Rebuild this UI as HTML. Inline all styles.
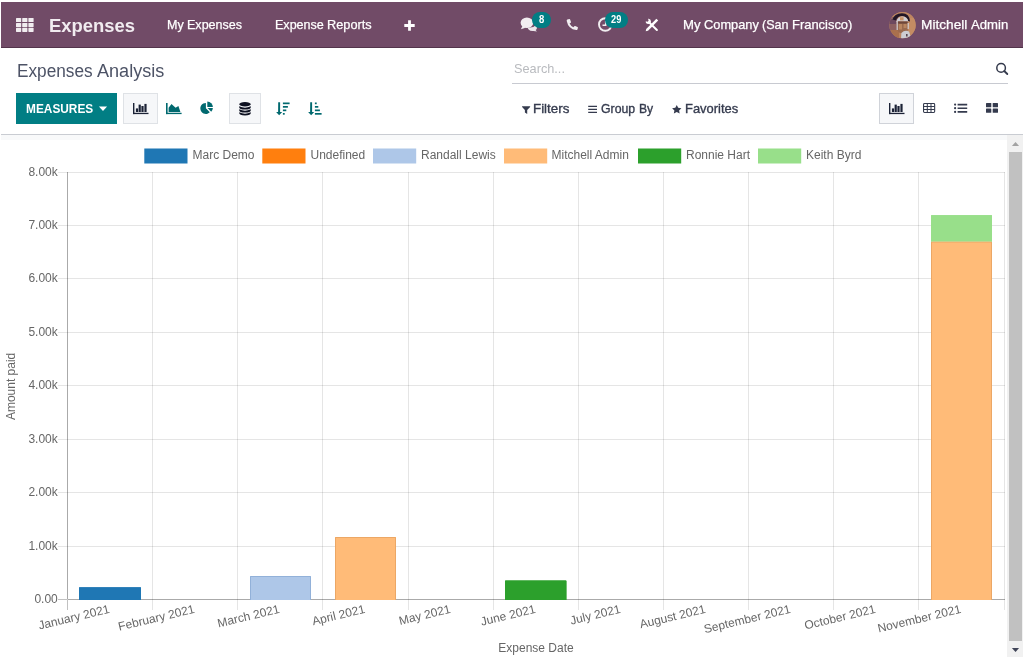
<!DOCTYPE html>
<html lang="en">
<head>
<meta charset="utf-8">
<title>Expenses Analysis</title>
<style>
html,body{margin:0;padding:0;background:#fff;}
body{width:1024px;height:658px;position:relative;overflow:hidden;font-family:"Liberation Sans",sans-serif;}
.t{position:absolute;white-space:pre;line-height:20px;height:20px;}
.abs{position:absolute;}
#nav{position:absolute;left:1px;top:2px;width:1022px;height:45px;background:#714b67;border-bottom:1px solid #53344b;}
svg{position:absolute;overflow:visible;}
.btn{position:absolute;box-sizing:border-box;}
</style>
</head>
<body>

<header>
<div id="nav"></div>
<svg style="left:16px;top:18px" width="18" height="14" viewBox="0 0 18 14"><rect x="0.00" y="0.00" width="5.2" height="4.1" rx="0.6" fill="#f1edf0"/><rect x="6.20" y="0.00" width="5.2" height="4.1" rx="0.6" fill="#f1edf0"/><rect x="12.40" y="0.00" width="5.2" height="4.1" rx="0.6" fill="#f1edf0"/><rect x="0.00" y="4.90" width="5.2" height="4.1" rx="0.6" fill="#f1edf0"/><rect x="6.20" y="4.90" width="5.2" height="4.1" rx="0.6" fill="#f1edf0"/><rect x="12.40" y="4.90" width="5.2" height="4.1" rx="0.6" fill="#f1edf0"/><rect x="0.00" y="9.80" width="5.2" height="4.1" rx="0.6" fill="#f1edf0"/><rect x="6.20" y="9.80" width="5.2" height="4.1" rx="0.6" fill="#f1edf0"/><rect x="12.40" y="9.80" width="5.2" height="4.1" rx="0.6" fill="#f1edf0"/></svg>
<div><span class="t" style="left:49.40px;top:16.05px;font-size:19.2px;color:#f1ecf0;font-weight:700;transform:scaleX(0.9600);transform-origin:0 0;">Expenses</span></div>
<div><span class="t" style="left:166.84px;top:14.50px;font-size:13px;color:#fff;font-weight:400;transform:scaleX(0.9636);transform-origin:0 0;-webkit-text-stroke:0.25px #fff;">My </span><span class="t" style="left:187.48px;top:14.50px;font-size:13px;color:#fff;font-weight:400;transform:scaleX(0.9650);transform-origin:0 0;-webkit-text-stroke:0.25px #fff;">Expenses</span></div>
<div><span class="t" style="left:275.44px;top:14.50px;font-size:13px;color:#fff;font-weight:400;transform:scaleX(0.9645);transform-origin:0 0;-webkit-text-stroke:0.25px #fff;">Expense </span><span class="t" style="left:326.92px;top:14.50px;font-size:13px;color:#fff;font-weight:400;transform:scaleX(0.9808);transform-origin:0 0;-webkit-text-stroke:0.25px #fff;">Reports</span></div>
<svg style="left:404px;top:19.5px" width="11" height="11" viewBox="0 0 11 11"><path d="M4.1 0.3h2.8v3.8h3.8v2.8h-3.8v3.8h-2.8v-3.8h-3.8v-2.8h3.8z" fill="#fff"/></svg>
<svg style="left:520px;top:17px" width="18" height="15" viewBox="0 0 18 15">
<path d="M10.2 10.6 Q14 10.4 15.4 8.4 Q17.2 9.6 17 11 Q16.8 12.4 15.6 13 L16.9 14.6 L13.4 13.9 Q10.4 14.3 8.6 12.4 Q7.9 11.6 7.8 11 Z" fill="#ebe5ea"/>
<ellipse cx="6.9" cy="5.7" rx="6.3" ry="5.3" fill="#f1edf0"/>
<path d="M2.4 9 L0.9 12.2 L5.6 10.8z" fill="#f1edf0"/>
</svg>
<div class="abs" style="left:532px;top:12px;width:19px;height:16px;border-radius:8px;background:#017e84;"></div>
<div class="t " style="left:538.6px;top:9.19px;font-size:11px;color:#fff;letter-spacing:0.000px;font-weight:700;transform:scaleX(0.86);transform-origin:0 0;">8</div>
<svg style="left:566px;top:19px" width="13" height="12" viewBox="0 0 13 12">
<path d="M1.3 0.5 L3.4 0.1 Q4 0.1 4.2 0.7 L5 3 Q5.1 3.5 4.7 3.8 L3.6 4.6 Q4.8 7.2 7.4 8.3 L8.3 7.2 Q8.7 6.8 9.2 7 L11.5 8 Q12 8.3 11.9 8.9 L11.4 10.6 Q11.1 11.2 10.2 11.1 Q2.4 10.2 0.7 2 Q0.6 0.9 1.3 0.5z" fill="#f1edf0"/></svg>
<svg style="left:598px;top:17px" width="15" height="15" viewBox="0 0 15 15">
<circle cx="7.3" cy="7.5" r="6.3" fill="none" stroke="#f1edf0" stroke-width="1.9"/>
<path d="M7.7 4v4.3h-3.2" fill="none" stroke="#f1edf0" stroke-width="1.5"/></svg>
<div class="abs" style="left:605px;top:12px;width:23px;height:16px;border-radius:8px;background:#017e84;"></div>
<div class="t " style="left:611.2px;top:9.19px;font-size:11px;color:#fff;letter-spacing:0.000px;font-weight:700;transform:scaleX(0.84);transform-origin:0 0;">29</div>
<svg style="left:645px;top:18px" width="14" height="14" viewBox="0 0 14 14">
<path d="M5 5.2 L11.9 12" stroke="#fff" stroke-width="2" stroke-linecap="round" fill="none"/>
<path d="M3.1 0.8 A2.6 2.6 0 1 1 0.75 3.2 L2.6 3.7 L3.6 2.7 Z" fill="#fff"/>
<path d="M11.4 0.8 L13.2 2.6 L3 12.8 L0.7 13.3 L1.2 11 Z" fill="#fff"/>
</svg>
<div><span class="t" style="left:683.19px;top:14.50px;font-size:13px;color:#fff;font-weight:400;transform:scaleX(1.0121);transform-origin:0 0;-webkit-text-stroke:0.25px #fff;">My </span><span class="t" style="left:703.91px;top:14.50px;font-size:13px;color:#fff;font-weight:400;transform:scaleX(0.9864);transform-origin:0 0;-webkit-text-stroke:0.25px #fff;">Company </span><span class="t" style="left:761.78px;top:14.50px;font-size:13px;color:#fff;font-weight:400;transform:scaleX(0.9654);transform-origin:0 0;-webkit-text-stroke:0.25px #fff;">(San </span><span class="t" style="left:792.31px;top:14.50px;font-size:13px;color:#fff;font-weight:400;transform:scaleX(0.9949);transform-origin:0 0;-webkit-text-stroke:0.25px #fff;">Francisco)</span></div>
<svg style="left:889px;top:12px" width="27" height="27" viewBox="0 0 27 27">
<defs><clipPath id="av"><circle cx="13.5" cy="13.1" r="13.2"/></clipPath><filter id="avb" x="-10%" y="-10%" width="120%" height="120%"><feGaussianBlur stdDeviation="0.55"/></filter></defs>
<g clip-path="url(#av)"><rect width="27" height="27" fill="#bd8560"/><g filter="url(#avb)">
<rect x="-3" y="-3" width="33" height="33" fill="#bd8560"/>
<path d="M0 5 H9 V19 H0 Z" fill="#8d6060"/>
<path d="M0 7 H7 V12 H0 Z" fill="#6d4a5e"/>
<path d="M2 18 H10 V27 H2 Z" fill="#a9704e"/>
<path d="M19.5 6 H27 V22 H19.5 Z" fill="#c48c64"/>
<path d="M3.5 7.5 Q5 1.5 13 1.2 Q20.5 1.2 21 9.5 L19.2 9 Q18.5 5.5 15.5 4.4 Q12 3.4 9.5 5 Q7.5 6.4 7 8.5 Z" fill="#211828"/>
<path d="M7.4 10 Q7.6 6.6 10 5.4 Q13.5 3.8 17 5.4 Q19.2 6.6 19.2 10 Z" fill="#cfcdd3"/>
<path d="M11 5.2 H14.6 V8.4 H11 Z" fill="#c99468"/>
<path d="M8.4 9.2 H18.8 V18 Q18 21 13.6 21.5 Q9.2 21 8.4 18 Z" fill="#9a6a50"/>
<path d="M8.6 9.6 H18.6 V11.6 H8.6 Z" fill="#6e463a"/>
<path d="M10 12 H13 V17.5 H10 Z M14.6 12 H17.6 V16 H14.6 Z" fill="#b98660"/>
<path d="M7.6 9 H8.8 V18 H7.6 Z M18.6 11 H19.8 V17 H18.6 Z" fill="#d2cfd3"/>
<path d="M12.4 21 Q15.5 17.6 20 19.4 L22.5 27 L12 27 Z" fill="#cdcdd3"/>
<path d="M17 22 H18.6 V24.4 H17 Z" fill="#5a4650"/>
</g></g></svg>
<div><span class="t" style="left:921.35px;top:14.50px;font-size:13px;color:#fff;font-weight:400;transform:scaleX(1.0509);transform-origin:0 0;-webkit-text-stroke:0.25px #fff;">Mitchell </span><span class="t" style="left:970.60px;top:14.50px;font-size:13px;color:#fff;font-weight:400;transform:scaleX(1.0110);transform-origin:0 0;-webkit-text-stroke:0.25px #fff;">Admin</span></div>
</header>
<section>
<div><span class="t" style="left:16.56px;top:60.66px;font-size:18px;color:#4d5366;font-weight:400;transform:scaleX(0.9571);transform-origin:0 0;">Expenses </span><span class="t" style="left:97.40px;top:60.66px;font-size:18px;color:#4d5366;font-weight:400;transform:scaleX(1.0038);transform-origin:0 0;">Analysis</span></div>
<div><span class="t" style="left:514.07px;top:58.50px;font-size:13px;color:#b9bbbf;font-weight:400;transform:scaleX(0.9790);transform-origin:0 0;">Search...</span></div>
<div class="abs" style="left:512px;top:83px;width:496px;height:1px;background:#c8cad1;"></div>
<svg style="left:995px;top:62px" width="14" height="14" viewBox="0 0 14 14">
<circle cx="6.1" cy="5.9" r="4.3" fill="none" stroke="#343a4c" stroke-width="1.5"/>
<path d="M9.2 9 L12.3 12" stroke="#343a4c" stroke-width="1.8" stroke-linecap="round"/></svg>
<div class="btn" style="left:16px;top:93px;width:101px;height:31px;background:#017e84;"></div>
<div><span class="t" style="left:26.29px;top:98.77px;font-size:12.5px;color:#fff;font-weight:700;transform:scaleX(0.9496);transform-origin:0 0;">MEASURES</span></div>
<svg style="left:98px;top:106px" width="10" height="6" viewBox="0 0 10 6"><path d="M0.9 0.6h8.2l-4.1 4.4z" fill="#fff"/></svg>
<div class="btn" style="left:123px;top:93px;width:35px;height:31px;background:#f6f7f9;border:1px solid #dfe2e6;"></div>
<svg style="left:132.7px;top:102.9px" width="16" height="12" viewBox="0 0 16 12">
<rect x="0" y="0" width="1.4" height="11.1" fill="#1b2236"/>
<rect x="0" y="9.8" width="15.5" height="1.3" fill="#1b2236"/>
<rect x="2.9" y="5.4" width="2.2" height="3.6" fill="#1b2236"/>
<rect x="5.6" y="1.6" width="2.2" height="7.4" fill="#1b2236"/>
<rect x="8.4" y="3.0" width="2.2" height="6" fill="#1b2236"/>
<rect x="11.4" y="0.9" width="2.2" height="8.1" fill="#1b2236"/></svg>
<svg style="left:166.1px;top:102.8px" width="16" height="12" viewBox="0 0 16 12">
<rect x="0" y="0" width="1.6" height="11.1" fill="#01696f"/>
<rect x="0" y="9.75" width="15.6" height="1.35" fill="#01696f"/>
<path d="M2.6 9 V4.8 L5.5 1.1 L9.6 4.8 L12.4 2.9 L14.4 9z" fill="#01696f"/></svg>
<svg style="left:200px;top:101px" width="14" height="14" viewBox="0 0 14 14">
<path d="M5.9 1.9 V7.3 L9.8 11.2 A5.5 5.5 0 1 1 5.9 1.9z" fill="#01696f"/>
<path d="M7.3 0.6 A5.6 5.6 0 0 1 12.9 6.1 H7.3z" fill="#01696f"/>
<path d="M7.6 7.1 H12.9 A5.6 5.6 0 0 1 11.2 10.7z" fill="#01696f"/></svg>
<div class="btn" style="left:229px;top:93px;width:32px;height:31px;background:#f6f7f9;border:1px solid #dfe2e6;"></div>
<svg style="left:239px;top:101.6px" width="12" height="14" viewBox="0 0 12 14">
<ellipse cx="6" cy="2.3" rx="5.8" ry="2.2" fill="#0d1020"/>
<path d="M0.2 4.3 Q6 7.2 11.8 4.3 V5.3 Q11.8 7.6 6 7.6 Q0.2 7.6 0.2 5.3z" fill="#0d1020"/>
<path d="M0.2 7.3 Q6 10.2 11.8 7.3 V8.3 Q11.8 10.6 6 10.6 Q0.2 10.6 0.2 8.3z" fill="#0d1020"/>
<path d="M0.2 10.2 Q6 13.1 11.8 10.2 V11 Q11.8 13.4 6 13.4 Q0.2 13.4 0.2 11z" fill="#0d1020"/></svg>
<svg style="left:276px;top:101.5px" width="14" height="14" viewBox="0 0 14 14"><path d="M2.2 0.3h1.9v9.6h2.1l-3.05 3.3l-3.05 -3.3h2z" fill="#01696f"/><rect x="6.9" y="0.50" width="6.7" height="1.7" fill="#01696f"/><rect x="6.9" y="4.00" width="5.0" height="1.7" fill="#01696f"/><rect x="6.9" y="7.50" width="3.4" height="1.7" fill="#01696f"/><rect x="6.9" y="11.00" width="1.8" height="1.7" fill="#01696f"/></svg>
<svg style="left:308px;top:101.5px" width="14" height="14" viewBox="0 0 14 14"><path d="M2.2 0.3h1.9v9.6h2.1l-3.05 3.3l-3.05 -3.3h2z" fill="#01696f"/><rect x="6.9" y="0.50" width="1.8" height="1.7" fill="#01696f"/><rect x="6.9" y="4.00" width="3.4" height="1.7" fill="#01696f"/><rect x="6.9" y="7.50" width="5.0" height="1.7" fill="#01696f"/><rect x="6.9" y="11.00" width="6.7" height="1.7" fill="#01696f"/></svg>
<svg style="left:521.8px;top:105.7px" width="9" height="9" viewBox="0 0 9 9"><path d="M0.3 0.2h7.7q0.4 0.3 0.1 0.7l-2.9 3v4l-2.3 -1.5v-2.5l-2.8 -3q-0.3 -0.4 0.2 -0.7z" fill="#353b4e"/></svg>
<div><span class="t" style="left:533.47px;top:99.20px;font-size:13px;color:#353b4e;font-weight:400;transform:scaleX(1.0265);transform-origin:0 0;-webkit-text-stroke:0.35px #353b4e;">Filters</span></div>
<svg style="left:588px;top:105px" width="10" height="9" viewBox="0 0 10 9"><path d="M0.2 1.4h8.8M0.2 4.4h8.8M0.2 7.4h8.8" stroke="#353b4e" stroke-width="1.2"/></svg>
<div><span class="t" style="left:601.23px;top:99.20px;font-size:13px;color:#353b4e;font-weight:400;transform:scaleX(0.9447);transform-origin:0 0;-webkit-text-stroke:0.35px #353b4e;">Group </span><span class="t" style="left:638.67px;top:99.20px;font-size:13px;color:#353b4e;font-weight:400;transform:scaleX(0.9333);transform-origin:0 0;-webkit-text-stroke:0.35px #353b4e;">By</span></div>
<svg style="left:672.1px;top:104.6px" width="10" height="9" viewBox="0 0 10 9"><path d="M4.75 0.1l1.45 2.75l3.2 0.45l-2.3 2.2l0.55 3.1l-2.9 -1.5l-2.9 1.5l0.55 -3.1l-2.3 -2.2l3.2 -0.45z" fill="#353b4e"/></svg>
<div><span class="t" style="left:685.31px;top:99.20px;font-size:13px;color:#353b4e;font-weight:400;transform:scaleX(0.9933);transform-origin:0 0;-webkit-text-stroke:0.35px #353b4e;">Favorites</span></div>
<div class="btn" style="left:879px;top:93px;width:35px;height:31px;background:#f6f7f9;border:1px solid #d0d3d9;"></div>
<svg style="left:888.7px;top:102.9px" width="16" height="12" viewBox="0 0 16 12">
<rect x="0" y="0" width="1.4" height="11.1" fill="#1b2236"/>
<rect x="0" y="9.8" width="15.5" height="1.3" fill="#1b2236"/>
<rect x="2.9" y="5.4" width="2.2" height="3.6" fill="#1b2236"/>
<rect x="5.6" y="1.6" width="2.2" height="7.4" fill="#1b2236"/>
<rect x="8.4" y="3.0" width="2.2" height="6" fill="#1b2236"/>
<rect x="11.4" y="0.9" width="2.2" height="8.1" fill="#1b2236"/></svg>
<svg style="left:922.8px;top:102.8px" width="13" height="11" viewBox="0 0 13 11">
<rect x="0.55" y="0.55" width="11.1" height="8.9" rx="0.9" fill="none" stroke="#353b4e" stroke-width="1.1"/>
<path d="M0.6 3.5h11M0.6 6.5h11M4.3 0.6v8.8M8 0.6v8.8" stroke="#353b4e" stroke-width="1" fill="none"/></svg>
<svg style="left:953.9px;top:103px" width="14" height="11" viewBox="0 0 14 11">
<circle cx="1.1" cy="1.6" r="1.1" fill="#353b4e"/><circle cx="1.1" cy="5.2" r="1.1" fill="#353b4e"/><circle cx="1.1" cy="8.9" r="1.1" fill="#353b4e"/>
<path d="M3.6 1.6h9.6M3.6 5.2h9.6M3.6 8.9h9.6" stroke="#353b4e" stroke-width="1.6"/></svg>
<svg style="left:986px;top:103px" width="13" height="10" viewBox="0 0 13 10">
<rect x="0" y="0" width="5.3" height="4.3" rx="0.5" fill="#353b4e"/><rect x="6.7" y="0" width="5.3" height="4.3" rx="0.5" fill="#353b4e"/>
<rect x="0" y="5.6" width="5.3" height="4.2" rx="0.5" fill="#353b4e"/><rect x="6.7" y="5.6" width="5.3" height="4.2" rx="0.5" fill="#353b4e"/></svg>
</section>
<main>
<div class="abs" style="left:1px;top:134px;width:1022px;height:1px;background:#c9ccd2;"></div>
<div class="abs" style="left:1px;top:135px;width:1006px;height:5px;background:#f8f9fa;"></div>
<div class="abs" style="left:1007px;top:135px;width:16px;height:522px;background:#f1f1f1;"></div>
<div class="abs" style="left:1009px;top:152px;width:13px;height:489px;background:#c1c1c1;"></div>
<svg style="left:1011px;top:141px" width="9" height="6" viewBox="0 0 9 6"><path d="M4.5 0.9L8.1 4.9H0.9z" fill="#a3a3a3"/></svg>
<svg style="left:1011px;top:647px" width="9" height="6" viewBox="0 0 9 6"><path d="M0.9 1.1H8.1L4.5 5.1z" fill="#404558"/></svg>
<svg style="left:0;top:0;will-change:transform" width="1007" height="658" viewBox="0 0 1007 658" font-family="'Liberation Sans', sans-serif" font-size="12" fill="#666">
<rect x="58" y="172" width="947" height="1" fill="rgba(0,0,0,0.1)"/>
<rect x="58" y="225" width="947" height="1" fill="rgba(0,0,0,0.1)"/>
<rect x="58" y="278" width="947" height="1" fill="rgba(0,0,0,0.1)"/>
<rect x="58" y="332" width="947" height="1" fill="rgba(0,0,0,0.1)"/>
<rect x="58" y="385" width="947" height="1" fill="rgba(0,0,0,0.1)"/>
<rect x="58" y="439" width="947" height="1" fill="rgba(0,0,0,0.1)"/>
<rect x="58" y="492" width="947" height="1" fill="rgba(0,0,0,0.1)"/>
<rect x="58" y="546" width="947" height="1" fill="rgba(0,0,0,0.1)"/>
<rect x="58" y="599" width="947" height="1" fill="rgba(0,0,0,0.1)"/>
<rect x="58" y="599" width="9" height="1" fill="rgba(0,0,0,0.16)"/>
<rect x="68" y="599" width="937" height="1" fill="rgba(0,0,0,0.26)"/>
<rect x="67" y="172" width="1" height="438" fill="rgba(0,0,0,0.1)"/>
<rect x="67" y="172" width="1" height="427" fill="rgba(0,0,0,0.26)"/>
<rect x="67" y="600" width="1" height="10" fill="rgba(0,0,0,0.16)"/>
<rect x="152" y="172" width="1" height="438" fill="rgba(0,0,0,0.1)"/>
<rect x="237" y="172" width="1" height="438" fill="rgba(0,0,0,0.1)"/>
<rect x="322" y="172" width="1" height="438" fill="rgba(0,0,0,0.1)"/>
<rect x="408" y="172" width="1" height="438" fill="rgba(0,0,0,0.1)"/>
<rect x="493" y="172" width="1" height="438" fill="rgba(0,0,0,0.1)"/>
<rect x="578" y="172" width="1" height="438" fill="rgba(0,0,0,0.1)"/>
<rect x="663" y="172" width="1" height="438" fill="rgba(0,0,0,0.1)"/>
<rect x="748" y="172" width="1" height="438" fill="rgba(0,0,0,0.1)"/>
<rect x="833" y="172" width="1" height="438" fill="rgba(0,0,0,0.1)"/>
<rect x="918" y="172" width="1" height="438" fill="rgba(0,0,0,0.1)"/>
<rect x="1004" y="172" width="1" height="438" fill="rgba(0,0,0,0.1)"/>
<text x="57.8" y="175.9" text-anchor="end">8.00k</text>
<text x="57.8" y="228.9" text-anchor="end">7.00k</text>
<text x="57.8" y="281.9" text-anchor="end">6.00k</text>
<text x="57.8" y="335.9" text-anchor="end">5.00k</text>
<text x="57.8" y="388.9" text-anchor="end">4.00k</text>
<text x="57.8" y="442.9" text-anchor="end">3.00k</text>
<text x="57.8" y="495.9" text-anchor="end">2.00k</text>
<text x="57.8" y="549.9" text-anchor="end">1.00k</text>
<text x="57.8" y="602.9" text-anchor="end">0.00</text>
<rect x="79" y="587.3" width="62" height="12.700000000000045" fill="#1f77b4"/><path d="M79.5 600V587.8H140.5V600" fill="none" stroke="#1f77b4" stroke-width="1"/>
<rect x="250" y="576" width="61" height="24" fill="#aec7e8"/><path d="M250.5 600V576.5H310.5V600" fill="none" stroke="#92b1d9" stroke-width="1"/>
<rect x="335" y="537" width="61" height="63" fill="#ffbb78"/><path d="M335.5 600V537.5H395.5V600" fill="none" stroke="#eca765" stroke-width="1"/>
<rect x="505" y="580.5" width="61.39999999999998" height="19.5" fill="#2ca02c"/><path d="M505.5 600V581.0H565.9V600" fill="none" stroke="#2ca02c" stroke-width="1"/>
<rect x="931" y="241.5" width="61" height="358.5" fill="#ffbb78"/><path d="M931.5 600V242.0H991.5V600" fill="none" stroke="#eca765" stroke-width="1"/>
<rect x="931" y="215.2" width="61" height="26.30000000000001" fill="#98df8a"/><path d="M931.5 241.5V215.7H991.5V241.5" fill="none" stroke="#98df8a" stroke-width="1"/>
<rect x="144.3" y="148.5" width="43.2" height="15" fill="#1f77b4"/>
<text x="192.5" y="158.8">Marc Demo</text>
<rect x="262.3" y="148.5" width="43.2" height="15" fill="#ff7f0e"/>
<text x="310.5" y="158.8">Undefined</text>
<rect x="373" y="148.5" width="43.2" height="15" fill="#aec7e8"/>
<text x="421" y="158.8">Randall Lewis</text>
<rect x="504" y="148.5" width="43.2" height="15" fill="#ffbb78"/>
<text x="551.5" y="158.8">Mitchell Admin</text>
<rect x="638" y="148.5" width="43.2" height="15" fill="#2ca02c"/>
<text x="686" y="158.8">Ronnie Hart</text>
<rect x="758" y="148.5" width="43.2" height="15" fill="#98df8a"/>
<text x="806" y="158.8">Keith Byrd</text>
<text x="109.6" y="612.8" text-anchor="end" transform="rotate(-13.4 109.6 610)">January 2021</text>
<text x="194.6" y="612.8" text-anchor="end" transform="rotate(-13.4 194.6 610)">February 2021</text>
<text x="279.6" y="612.8" text-anchor="end" transform="rotate(-13.4 279.6 610)">March 2021</text>
<text x="365.1" y="612.8" text-anchor="end" transform="rotate(-13.4 365.1 610)">April 2021</text>
<text x="450.6" y="612.8" text-anchor="end" transform="rotate(-13.4 450.6 610)">May 2021</text>
<text x="535.6" y="612.8" text-anchor="end" transform="rotate(-13.4 535.6 610)">June 2021</text>
<text x="620.6" y="612.8" text-anchor="end" transform="rotate(-13.4 620.6 610)">July 2021</text>
<text x="705.6" y="612.8" text-anchor="end" transform="rotate(-13.4 705.6 610)">August 2021</text>
<text x="790.6" y="612.8" text-anchor="end" transform="rotate(-13.4 790.6 610)">September 2021</text>
<text x="875.6" y="612.8" text-anchor="end" transform="rotate(-13.4 875.6 610)">October 2021</text>
<text x="961.1" y="612.8" text-anchor="end" transform="rotate(-13.4 961.1 610)">November 2021</text>
<text x="536" y="652" text-anchor="middle">Expense Date</text>
<text x="15.3" y="386.4" text-anchor="middle" transform="rotate(-90 15.3 386.4)">Amount paid</text>
</svg>
</main>
</body></html>
